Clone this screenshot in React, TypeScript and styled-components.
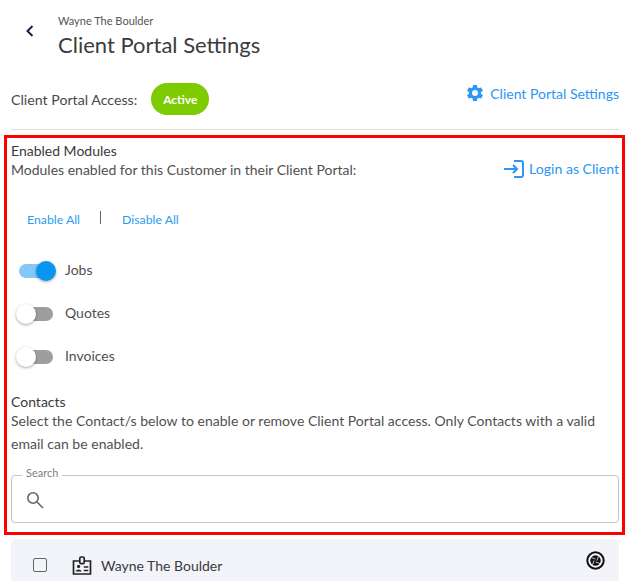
import React from "react";
import styled, { createGlobalStyle } from "styled-components";

const Global = createGlobalStyle`
  html, body { margin: 0; padding: 0; background: #fff; overflow: hidden; }
  body { font-family: "Lato", "Open Sans", sans-serif; color: #3d3d3d; }
`;

const Page = styled.div`
  width: 630px;
  height: 581px;
  overflow: hidden;
  display: flex;
  flex-direction: column;
`;

const Header = styled.header`
  display: flex;
  align-items: flex-start;
  height: 83px;
  flex: none;
  box-sizing: border-box;
  padding: 14px 0 0 24px;
`;

const BackButton = styled.div`
  width: 34px;
  height: 34px;
  display: flex;
  align-items: flex-start;
  padding-top: 10px;
  box-sizing: border-box;
`;

const Crumb = styled.div`
  font-size: 11px;
  line-height: 14px;
  color: #555;
`;

const Title = styled.h1`
  margin: 2px 0 0;
  font-size: 22px;
  line-height: 30px;
  font-weight: 400;
  color: #3c3c3c;
`;

const AccessRow = styled.div`
  display: flex;
  align-items: flex-start;
  justify-content: space-between;
  flex: none;
  margin: 0 11px;
  height: 47px;
  box-sizing: border-box;
  border-bottom: 1px solid #dedede;
`;

const AccessLeft = styled.div`
  display: flex;
  align-items: center;
  gap: 14px;
  font-size: 14.2px;
  color: #484848;
`;

const Pill = styled.span`
  width: 58px;
  height: 32px;
  border-radius: 16px;
  background: #7dcb00;
  color: #fff;
  font-size: 12px;
  font-weight: 700;
  display: flex;
  align-items: center;
  justify-content: center;
`;

const LinkRow = styled.a`
  display: flex;
  align-items: center;
  gap: 5px;
  color: #2b96f3;
  font-size: 14px;
  height: 20px;
`;

const LoginLink = styled(LinkRow)`
  font-size: 14.1px;
  margin-top: -2px;
`;

const Outlined = styled.section`
  margin: 5px 5px 0 4px;
  height: 400px;
  flex: none;
  box-sizing: border-box;
  border: 3px solid #ff0000;
  padding: 4px 3px 0 4px;
  display: flex;
  flex-direction: column;
`;

const SectionTitle = styled.div`
  font-size: 14px;
  line-height: 18px;
  font-weight: 400;
  color: #3a3a3a;
`;

const TopRow = styled.div`
  display: flex;
  justify-content: space-between;
  align-items: center;
  font-size: 14px;
  line-height: 20px;
  color: #505050;
`;

const BulkRow = styled.div`
  display: flex;
  align-items: center;
  margin: 29px 0 0 16px;
  height: 20px;
  font-size: 12.3px;
  color: #2b9cf0;
`;

const Sep = styled.span`
  width: 1px;
  height: 13px;
  background: #666;
  margin: -3px 21px 0 20px;
`;

const ToggleList = styled.div`
  display: flex;
  flex-direction: column;
  gap: 15px;
  margin: 28px 0 0 8px;
`;

const ToggleRow = styled.div`
  display: flex;
  align-items: center;
  height: 28px;
  font-size: 14px;
  color: #505050;
`;

const ToggleLabel = styled.span`
  margin-top: -4px;
`;

const Switch = styled.span<{ $on: boolean }>`
  position: relative;
  display: block;
  width: 34px;
  height: 14px;
  margin-right: 12px;
  border-radius: 7px;
  background: ${(p) => (p.$on ? "#82c9f9" : "#9e9e9e")};
  &::after {
    content: "";
    position: absolute;
    top: -3px;
    left: ${(p) => (p.$on ? 17 : -3)}px;
    width: 20px;
    height: 20px;
    border-radius: 50%;
    background: ${(p) => (p.$on ? "#0a95f2" : "#fff")};
    box-shadow: 0 1px 3px rgba(0, 0, 0, 0.35);
  }
`;

const ContactsBlock = styled.div`
  margin-top: 22px;
`;

const Description = styled.p`
  margin: -2px 0 0;
  width: 600px;
  font-size: 14px;
  letter-spacing: 0.02px;
  line-height: 23px;
  color: #505050;
`;

const SearchField = styled.fieldset`
  margin: 12px 0 0;
  padding: 0 0 0 14px;
  height: 56px;
  box-sizing: border-box;
  border: 1px solid #c4c4c4;
  border-radius: 4px;
  min-inline-size: 0;
`;

const SearchLegend = styled.legend`
  padding: 0 4px 4px;
  margin-left: -4px;
  font-size: 11px;
  line-height: 12px;
  color: #808080;
`;

const SearchBody = styled.div`
  height: 33px;
  display: flex;
  align-items: center;
`;

const ContactRow = styled.div`
  margin: 4px 11px 0;
  height: 52px;
  flex: none;
  background: #f2f4f9;
  border-radius: 5px 5px 0 0;
  display: flex;
  align-items: center;
  padding: 0 14px 0 22px;
  font-size: 14px;
  color: #3a3a3a;
`;

const CheckBox = styled.span`
  width: 12px;
  height: 12px;
  border: 1.5px solid #666;
  border-radius: 2px;
  margin-right: 25px;
`;

const ContactName = styled.span`
  margin-left: 9px;
  flex: 1;
`;

const ShutterWrap = styled.span`
  display: flex;
  margin-bottom: 9px;
`;

const Chevron = () => (
  <svg width="12" height="14" viewBox="0 0 12 14" fill="none">
    <path d="M8.5 2 3.5 7l5 5" stroke="#10243e" strokeWidth="2" />
  </svg>
);

const Gear = () => (
  <svg width="20" height="20" viewBox="0 0 24 24" fill="#2b96f3">
    <path d="M19.14 12.94c.04-.3.06-.61.06-.94s-.02-.64-.07-.94l2.03-1.58a.5.5 0 0 0 .12-.64l-1.92-3.32a.5.5 0 0 0-.59-.22l-2.39.96a7 7 0 0 0-1.62-.94l-.36-2.54a.48.48 0 0 0-.48-.41h-3.84a.48.48 0 0 0-.47.41l-.36 2.54c-.59.24-1.13.57-1.62.94l-2.39-.96a.49.49 0 0 0-.59.22L2.74 8.84a.48.48 0 0 0 .12.64l2.03 1.58c-.05.3-.09.63-.09.94s.02.64.07.94l-2.03 1.58a.5.5 0 0 0-.12.64l1.92 3.32c.12.22.37.29.59.22l2.39-.96c.5.38 1.03.7 1.62.94l.36 2.54c.05.24.24.41.48.41h3.84c.24 0 .44-.17.47-.41l.36-2.54c.59-.24 1.13-.56 1.62-.94l2.39.96c.22.08.47 0 .59-.22l1.92-3.32a.48.48 0 0 0-.12-.64l-2.01-1.58zM12 15.6A3.6 3.6 0 1 1 12 8.4a3.6 3.6 0 0 1 0 7.2z" />
  </svg>
);

const LoginIcon = () => (
  <svg width="20" height="18" viewBox="0 0 20 18" fill="none" stroke="#2b96f3" strokeWidth="2">
    <path d="M10 1h7a2 2 0 0 1 2 2v12a2 2 0 0 1-2 2h-7" />
    <path d="M0 9h13M9 5l4 4-4 4" />
  </svg>
);

const SearchIcon = () => (
  <svg width="18" height="18" viewBox="0 0 18 18" fill="none" stroke="#666" strokeWidth="1.6">
    <circle cx="7" cy="7" r="5.2" />
    <path d="m11 11 6 6" />
  </svg>
);

const BadgeIcon = () => (
  <svg width="20" height="19" viewBox="0 0 20 19" fill="none" stroke="#222" strokeWidth="1.7">
    <path d="M7.5 5H1.5v13h17V5h-6" />
    <rect x="7.8" y="1" width="4.4" height="6.6" rx="1.4" />
    <circle cx="6.6" cy="10.4" r="1.6" fill="#222" stroke="none" />
    <path d="M3.6 15.5c.3-2.8 5.7-2.8 6 0z" fill="#222" stroke="none" />
    <path d="M11.8 11h4.5M11.8 14.5h4.5" strokeWidth="1.5" />
  </svg>
);

const ShutterIcon = () => (
  <svg width="19" height="19" viewBox="0 0 19 19">
    <circle cx="9.5" cy="9.5" r="8.2" fill="none" stroke="#111" strokeWidth="2" />
    <circle cx="9.5" cy="9.5" r="5.2" fill="#111" />
    <path d="M5.2 6.5 9.5 8M12.5 5.2 11 9.5M13.8 12.5 9.5 11M6.5 13.8 8 9.5" stroke="#f2f4f9" strokeWidth="0.8" fill="none" />
  </svg>
);

export default function App() {
  return (
    <Page>
      <Global />
      <Header>
        <BackButton>
          <Chevron />
        </BackButton>
        <div>
          <Crumb>Wayne The Boulder</Crumb>
          <Title>Client Portal Settings</Title>
        </div>
      </Header>
      <AccessRow>
        <AccessLeft>
          Client Portal Access:
          <Pill>Active</Pill>
        </AccessLeft>
        <LinkRow>
          <Gear />
          Client Portal Settings
        </LinkRow>
      </AccessRow>
      <Outlined>
        <SectionTitle>Enabled Modules</SectionTitle>
        <TopRow>
          Modules enabled for this Customer in their Client Portal:
          <LoginLink>
            <LoginIcon />
            Login as Client
          </LoginLink>
        </TopRow>
        <BulkRow>
          Enable All
          <Sep />
          Disable All
        </BulkRow>
        <ToggleList>
          <ToggleRow>
            <Switch $on />
            <ToggleLabel>Jobs</ToggleLabel>
          </ToggleRow>
          <ToggleRow>
            <Switch $on={false} />
            <ToggleLabel>Quotes</ToggleLabel>
          </ToggleRow>
          <ToggleRow>
            <Switch $on={false} />
            <ToggleLabel>Invoices</ToggleLabel>
          </ToggleRow>
        </ToggleList>
        <ContactsBlock>
          <SectionTitle>Contacts</SectionTitle>
          <Description>
            Select the Contact/s below to enable or remove Client Portal access. Only Contacts with a valid email can be enabled.
          </Description>
        </ContactsBlock>
        <SearchField>
          <SearchLegend>Search</SearchLegend>
          <SearchBody>
            <SearchIcon />
          </SearchBody>
        </SearchField>
      </Outlined>
      <ContactRow>
        <CheckBox />
        <BadgeIcon />
        <ContactName>Wayne The Boulder</ContactName>
        <ShutterWrap>
          <ShutterIcon />
        </ShutterWrap>
      </ContactRow>
    </Page>
  );
}
